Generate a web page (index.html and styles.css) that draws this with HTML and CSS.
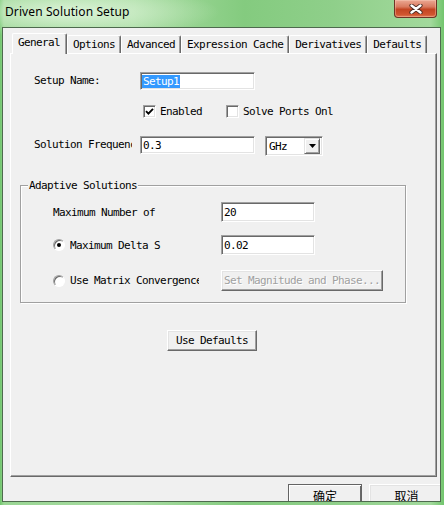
FILE: index.html
```html
<!DOCTYPE html>
<html lang="en">
<head>
    <meta charset="UTF-8">
    <title>Driven Solution Setup</title>
    <link rel="stylesheet" href="styles.css">
</head>
<body>
    <div class="window">
        <div class="titlebar">
            <span class="title">Driven Solution Setup</span>
            <div class="close-btn">
                <svg width="14" height="10" viewBox="0 0 14 10">
                    <path d="M2.5 1.5 L11.5 8.5 M11.5 1.5 L2.5 8.5" stroke="#4a2a22" stroke-width="4.2" stroke-linecap="round" fill="none"/>
                    <path d="M2.5 1.5 L11.5 8.5 M11.5 1.5 L2.5 8.5" stroke="#fff" stroke-width="2.4" stroke-linecap="round" fill="none"/>
                </svg>
            </div>
        </div>

        <div class="client">
            <div class="tabs">
                <div class="tab active">General</div>
                <div class="tab">Options</div>
                <div class="tab">Advanced</div>
                <div class="tab">Expression Cache</div>
                <div class="tab">Derivatives</div>
                <div class="tab">Defaults</div>
            </div>

            <div class="panel">
                <div class="row">
                    <span class="label">Setup Name:</span>
                    <div class="field"><span class="selected">Setup1</span></div>
                </div>

                <div class="row checks">
                    <span class="check">
                        <svg width="9" height="9" viewBox="0 0 9 9">
                            <path d="M1 4.2 L3.4 6.6 L8 1.8" stroke="#000" stroke-width="1.9" fill="none"/>
                        </svg>
                    </span>
                    <span class="check-label">Enabled</span>
                    <span class="check second"></span>
                    <span class="check-label">Solve Ports Onl</span>
                </div>

                <div class="row freq">
                    <span class="label">Solution Frequenc</span>
                    <div class="field">0.3</div>
                    <div class="combo">
                        <span class="combo-value">GHz</span>
                        <span class="combo-btn">
                            <svg width="7" height="4" viewBox="0 0 7 4"><path d="M0 0 H7 L3.5 4 Z" fill="#000"/></svg>
                        </span>
                    </div>
                </div>

                <div class="group">
                    <span class="group-title">Adaptive Solutions</span>

                    <div class="group-row passes">
                        <span class="group-label">Maximum Number of</span>
                        <div class="field tall">20</div>
                    </div>

                    <div class="group-row delta">
                        <span class="radio checked"></span>
                        <span class="radio-label short">Maximum Delta S</span>
                        <div class="field tall">0.02</div>
                    </div>

                    <div class="group-row matrix">
                        <span class="radio"></span>
                        <span class="radio-label long">Use Matrix Convergence</span>
                        <button class="btn disabled">Set Magnitude and Phase...</button>
                    </div>
                </div>

                <button class="btn defaults">Use Defaults</button>
            </div>

            <div class="footer">
                <button class="btn ok">确定</button>
                <button class="btn cancel">取消</button>
            </div>
        </div>
    </div>
</body>
</html>
```

FILE: styles.css
```css
body {
    margin: 0;
    font-family: "DejaVu Sans Mono", "Noto Sans CJK SC", monospace;
    font-size: 11px;
    letter-spacing: -0.62px;
    color: #000;
}

.window {
    width: 444px;
    height: 505px;
    box-sizing: border-box;
    padding: 0 3px 3px 2px;
    display: flex;
    flex-direction: column;
    overflow: hidden;
    background:
        radial-gradient(ellipse 150px 26px at 70px 12px, rgba(236, 250, 232, 0.8), rgba(236, 250, 232, 0) 100%),
        linear-gradient(90deg, #70c56c 0, #9ad694 4px, #a7dca1 30%, #84cb7f 55%, #8fcf8a 75%, #a2d99c 97%, #72c56d 100%);
}

.titlebar {
    height: 27px;
    display: flex;
    align-items: flex-start;
    flex: none;
}

.title {
    font-family: "Noto Sans", sans-serif;
    font-size: 12px;
    letter-spacing: 0.1px;
    line-height: 16px;
    margin: 4px 0 0 3px;
}

.close-btn {
    margin-left: auto;
    margin-right: 4px;
    width: 43px;
    height: 18px;
    box-sizing: border-box;
    border: 1px solid #6e3426;
    border-top: none;
    border-radius: 0 0 4px 4px;
    background: linear-gradient(#eba893, #d97a5f 40%, #c34522 55%, #d0552f 85%, #e07b55);
    box-shadow: inset 0 0 0 1px rgba(255, 220, 200, 0.35);
    display: flex;
    align-items: center;
    justify-content: center;
}

.client {
    flex: 1;
    min-height: 0;
    background: #f0f0f0;
    border: 1px solid #4e6a4e;
    padding: 5px 0 0 7px;
    display: flex;
    flex-direction: column;
    overflow: hidden;
}

/* tabs */

.tabs {
    display: flex;
    align-items: flex-end;
    height: 20px;
    padding-left: 2px;
    position: relative;
    z-index: 1;
    flex: none;
}

.tab {
    height: 18px;
    box-sizing: border-box;
    padding: 0 5px;
    line-height: 17px;
    white-space: nowrap;
    border-top: 1px solid #fff;
    border-left: 1px solid #fff;
    border-right: 1px solid #696969;
    border-radius: 2px 2px 0 0;
    box-shadow: inset -1px 0 #a0a0a0;
}

.tab.active {
    height: 21px;
    margin-bottom: -1px;
    padding: 0 6px 2px 5px;
    background: #f0f0f0;
}

.panel {
    width: 427px;
    height: 424px;
    box-sizing: border-box;
    flex: none;
    border-top: 1px solid #fff;
    border-left: 1px solid #fff;
    border-right: 1px solid #696969;
    border-bottom: 1px solid #696969;
    box-shadow: inset -1px -1px #a0a0a0;
    padding-top: 18px;
}

/* form rows */

.row {
    display: flex;
    align-items: center;
    margin-left: 23px;
}

.label {
    width: 98px;
    margin-right: 8px;
    flex: none;
    overflow: hidden;
    white-space: nowrap;
    line-height: 18px;
}

.field {
    width: 115px;
    height: 18px;
    box-sizing: border-box;
    flex: none;
    background: #fff;
    border: 1px solid;
    border-color: #a0a0a0 #fff #fff #a0a0a0;
    box-shadow: inset 1px 1px #696969, inset -1px -1px #e3e3e3;
    padding-left: 2px;
    display: flex;
    align-items: center;
    white-space: nowrap;
}

.field.tall {
    width: 94px;
    height: 20px;
}

.selected {
    background: #3399ff;
    color: #fff;
    line-height: 13px;
    margin-left: -1px;
    padding: 0 1px;
}

.checks {
    margin-top: 12px;
    height: 18px;
    padding-left: 109px;
}

.check {
    width: 13px;
    height: 13px;
    box-sizing: border-box;
    flex: none;
    background: #fff;
    border: 1px solid;
    border-color: #a0a0a0 #fff #fff #a0a0a0;
    box-shadow: inset 1px 1px #696969, inset -1px -1px #e3e3e3;
    display: flex;
    align-items: center;
    justify-content: center;
}

.check.second {
    margin-left: 24px;
}

.check-label {
    margin-left: 4px;
    white-space: nowrap;
}

.freq {
    margin-top: 16px;
    align-items: flex-start;
}

.combo {
    width: 58px;
    height: 20px;
    box-sizing: border-box;
    margin-left: 10px;
    background: #fff;
    border: 1px solid;
    border-color: #a0a0a0 #fff #fff #a0a0a0;
    box-shadow: inset 1px 1px #696969, inset -1px -1px #e3e3e3;
    padding: 2px 2px 2px 3px;
    display: flex;
    align-items: center;
}

.combo-value {
    flex: 1;
}

.combo-btn {
    width: 16px;
    height: 16px;
    box-sizing: border-box;
    background: #f0f0f0;
    border: 1px solid;
    border-color: #e3e3e3 #696969 #696969 #e3e3e3;
    box-shadow: inset 1px 1px #fff, inset -1px -1px #a0a0a0;
    display: flex;
    align-items: center;
    justify-content: center;
}

/* adaptive solutions group */

.group {
    width: 386px;
    box-sizing: border-box;
    margin: 29px 0 0 9px;
    border: 1px solid #a0a0a0;
    box-shadow: inset 1px 1px #fff, 1px 1px #fff;
    padding-bottom: 11px;
}

.group-title {
    display: block;
    width: max-content;
    margin: -7px 0 0 7px;
    padding: 0 1px;
    background: #f0f0f0;
    line-height: 13px;
}

.group-row {
    display: flex;
    align-items: center;
    margin-left: 32px;
}

.group-row.passes {
    margin-top: 10px;
}

.group-row.delta {
    margin-top: 13px;
}

.group-row.matrix {
    margin-top: 15px;
}

.group-label {
    width: 168px;
    white-space: nowrap;
}

.radio {
    width: 12px;
    height: 12px;
    box-sizing: border-box;
    flex: none;
    border-radius: 50%;
    background: #fff;
    border: 1px solid;
    border-color: #a0a0a0 #fff #fff #a0a0a0;
    box-shadow: inset 1px 1px #696969;
    display: flex;
    align-items: center;
    justify-content: center;
}

.radio.checked::after {
    content: "";
    width: 4px;
    height: 4px;
    border-radius: 50%;
    background: #000;
}

.radio-label {
    margin-left: 5px;
    overflow: hidden;
    white-space: nowrap;
}

.radio-label.short {
    width: 151px;
}

.radio-label.long {
    width: 129px;
    margin-right: 22px;
}

/* buttons */

.btn {
    font: inherit;
    letter-spacing: inherit;
    color: #000;
    background: #f0f0f0;
    border: 1px solid;
    border-color: #fff #696969 #696969 #fff;
    box-shadow: inset -1px -1px #a0a0a0, inset 1px 1px #e3e3e3;
    padding: 0;
    margin: 0;
    white-space: nowrap;
}

.btn.disabled {
    width: 162px;
    height: 21px;
    color: #a0a0a0;
    text-shadow: 1px 1px #fff;
}

.btn.defaults {
    display: block;
    width: 90px;
    height: 21px;
    margin: 27px 0 0 156px;
}

.footer {
    display: flex;
    gap: 7px;
    margin-top: 7px;
    padding-left: 278px;
    flex: none;
}

.footer .btn {
    flex: none;
    height: 23px;
    font-family: "Noto Sans CJK SC", sans-serif;
    font-size: 12px;
    letter-spacing: 0;
    line-height: 19px;
}

.btn.ok {
    width: 74px;
    border-color: #646464;
    box-shadow: inset 1px 1px #fff, inset -1px -1px #696969;
}

.btn.cancel {
    width: 75px;
}
```
